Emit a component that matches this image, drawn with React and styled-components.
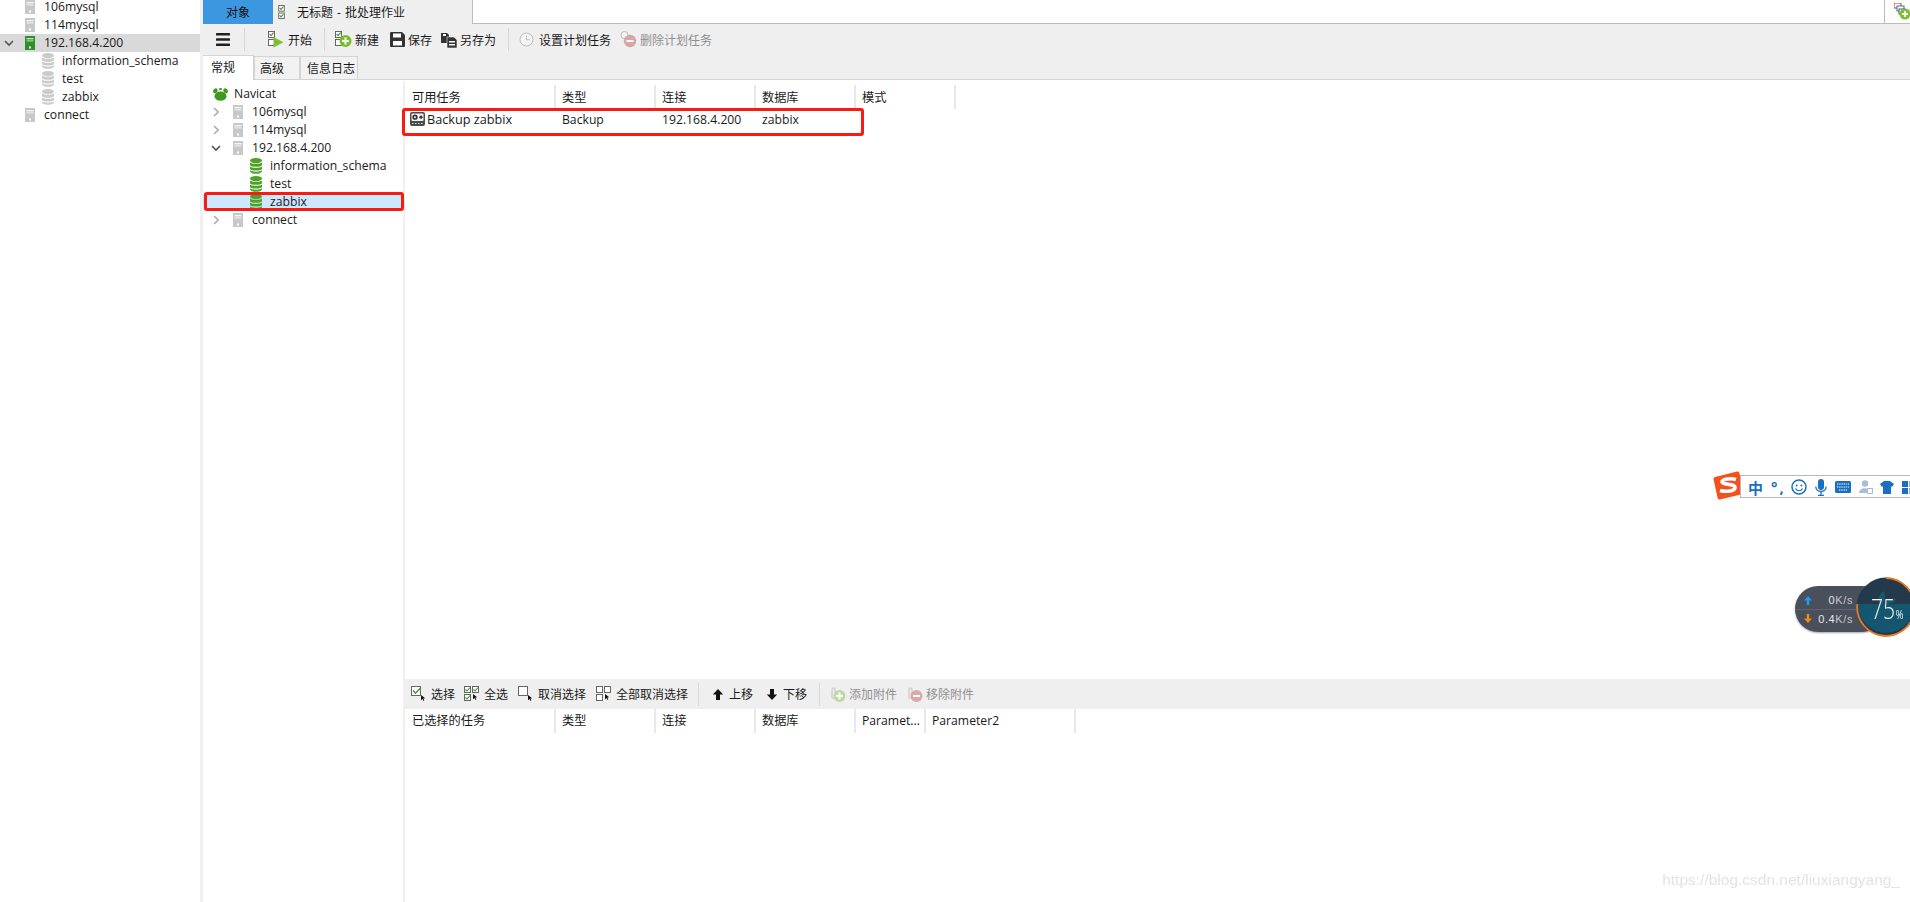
import React from "react";
import styled, { createGlobalStyle } from "styled-components";

const Global = createGlobalStyle`
  html, body { margin: 0; padding: 0; background: #fff; }
  body { font-family: "Open Sans", "Noto Sans CJK SC", sans-serif; font-size: 12px; color: #1a1a1a; overflow: hidden; }
  #root { height: 902px; }
`;

const Page = styled.div`
  position: relative; width: 1910px; height: 902px; overflow: hidden;
  display: grid; grid-template-columns: 203px 1fr;
`;
const Sidebar = styled.aside`
  background: #fff; border-right: 3px solid #f0f0f0; box-sizing: border-box; overflow: hidden;
`;
const SideList = styled.div`margin-top: -2px;`;
const Main = styled.main`display: flex; flex-direction: column; min-width: 0;`;

const TreeRow = styled.div`
  position: relative; height: 18px; display: flex; align-items: center;
  padding-left: ${p => p.$indent}px;
  background: ${p => p.$bg || "transparent"};
  white-space: nowrap; line-height: 18px; font-size: 12.2px;
`;
const Chevron = styled.span`
  position: absolute; left: ${p => p.$x}px; top: 4px; width: 10px; height: 10px; display: flex;
`;
const RowLabel = styled.span`margin-left: ${p => p.$gap}px;`;
const RedFrame = styled.span`
  position: absolute; pointer-events: none; box-sizing: border-box;
  left: ${p => p.$l}px; right: ${p => p.$r}px; top: ${p => p.$t}px; bottom: ${p => p.$b}px;
  border: 3px solid #fb1a12; border-radius: 3px;
`;

const TabBar = styled.div`
  height: 24px; display: flex; box-sizing: border-box; border-bottom: 1px solid #bcbcbc; flex: none;
`;
const ObjectTab = styled.div`
  width: 70px; background: #3d97e0; color: #111; display: flex; align-items: center; justify-content: center; font-size: 12px; margin-bottom: -1px;
`;
const DocTab = styled.div`
  width: 200px; background: #efefef; display: flex; align-items: center; gap: 12px; padding-left: 5px; box-sizing: border-box; margin-bottom: -1px;
  border-right: 1px solid #bcbcbc; font-size: 12px; word-spacing: 1px;
`;
const TabSpacer = styled.div`flex: 1;`;
const TabCorner = styled.div`
  width: 25px; border-left: 1px solid #bcbcbc; display: flex; align-items: flex-start; justify-content: flex-end;
`;

const TopTools = styled.div`
  height: 31px; background: #efefef; display: flex; align-items: center; padding-left: 13px; flex: none;
`;
const ToolItem = styled.div`
  display: flex; align-items: center; gap: ${p => p.$gap ?? 3}px; margin-left: ${p => p.$ml ?? 9}px;
  color: ${p => p.$off ? "#8f8f8f" : "#1a1a1a"}; white-space: nowrap; font-size: 12px;
`;
const ToolSep = styled.div`
  width: 1px; height: 23px; background: #d9d9d9; margin-left: ${p => p.$ml}px;
`;

const SubTabs = styled.div`
  height: 25px; background: #efefef; display: flex; align-items: flex-end; flex: none; border-bottom: 1px solid #d4d4d4; box-sizing: border-box;
`;
const SubTab = styled.div`
  width: ${p => p.$w}px; box-sizing: border-box; display: flex; align-items: center; padding-left: ${p => p.$pl}px;
  height: ${p => p.$on ? 25 : 23}px; background: ${p => p.$on ? "#fff" : "#f2f2f2"};
  border: 1px solid #d4d4d4; border-bottom: none; margin-bottom: ${p => p.$on ? -1 : 0}px; border-left-width: ${p => p.$on ? 0 : 1}px;
  padding-bottom: ${p => p.$on ? 3 : 0}px; font-size: 12px;
`;

const Body = styled.div`flex: 1; display: flex; min-height: 0;`;
const TreePane = styled.div`
  width: 200px; flex: none; padding-top: 5px; background: #fff; box-sizing: border-box;
`;
const Gutter = styled.div`width: 2px; background: #efefef; flex: none; margin-top: 1px;`;
const Content = styled.div`flex: 1; display: flex; flex-direction: column; min-width: 0;`;
const TableArea = styled.div`height: ${p => p.$h}px; flex: ${p => p.$grow ? 1 : "none"}; padding-top: ${p => p.$pt ?? 0}px; box-sizing: border-box;`;
const HeadRow = styled.div`display: flex; height: ${p => p.$h}px;`;
const HeadCell = styled.div`
  width: ${p => p.$w}px; box-sizing: border-box; border-right: 2px solid #e8e8e8; padding-left: ${p => p.$pl}px; flex: none;
  display: flex; align-items: center; white-space: nowrap; overflow: hidden; font-size: 12.2px; padding-bottom: ${p => p.$pb ?? 0}px;
`;
const DataRow = styled.div`position: relative; display: flex; height: 22px;`;
const DataCell = styled.div`
  width: ${p => p.$w}px; padding-left: ${p => p.$pl ?? 6}px; box-sizing: border-box; display: flex; align-items: center; gap: 2px; white-space: nowrap; padding-bottom: 2px;
  font-size: ${p => p.$fs ?? 12.2}px;
`;
const LowerTools = styled.div`
  height: 30px; background: #efefef; display: flex; align-items: center; padding-left: 6px; flex: none;
`;

const SogouBar = styled.div`
  position: absolute; left: 1740px; right: -2px; top: 475px; height: 23px; box-sizing: border-box;
  background: #fff; border: 1px solid #b6b6c6; color: #1a6fc0;
`;
const SogouLogo = styled.div`position: absolute; left: 1713px; top: 471px; width: 31px; height: 29px;`;
const SogouItem = styled.span`
  position: absolute; left: ${p => p.$x - 1741}px; top: 1px; height: 20px; display: flex; align-items: center;
  font-weight: 700; font-size: 15px; color: #1a6fc0; letter-spacing: ${p => p.$ls ?? 0}px;
`;

const NetPill = styled.div`
  position: absolute; left: 1795px; top: 586px; width: 90px; height: 46px; border-radius: 23px; padding-top: 5px; box-sizing: border-box;
  background: #4a4f5c; box-shadow: 0 1px 2px rgba(0,0,0,.35); color: #e6e6e6; font-size: 11px;
  display: flex; flex-direction: column;
`;
const NetRow = styled.div`
  height: ${p => p.$line ? 19 : 17}px; display: flex; align-items: center; padding-left: 9px; box-sizing: border-box; flex: none;
  ${p => p.$line ? "border-bottom: 1px solid #5d626e;" : ""}
`;
const NetValue = styled.span`
  width: 41px; text-align: right; letter-spacing: .6px; font-family: "Liberation Sans", sans-serif; white-space: nowrap;
  & b { font-weight: 400; color: #c3c6cc; }
`;
const Dial = styled.div`
  position: absolute; left: 1856px; top: 577px; width: 60px; height: 60px;
`;
const DialText = styled.span`
  position: absolute; left: 15px; top: 13px; color: #f2f4f5; font-size: 27px; line-height: 38px;
  font-family: "Open Sans", sans-serif; font-weight: 300; white-space: nowrap;
  transform: scaleX(.78); transform-origin: left center;
  & small { font-size: 12px; font-weight: 400; margin-left: 1px; }
`;
const Watermark = styled.div`
  position: absolute; right: 10px; top: 871px; color: #e3e3e3; font: 15.5px "Liberation Sans", sans-serif; filter: blur(.4px); white-space: nowrap;
`;

const ChevR = ({ c = "#a9a9a9" }) => <svg width="10" height="10" viewBox="0 0 10 10"><path d="M3 1l4.2 4L3 9" fill="none" stroke={c} strokeWidth="1.5"/></svg>;
const ChevD = () => <svg width="10" height="10" viewBox="0 0 10 10"><path d="M1 3l4 4 4-4" fill="none" stroke="#555" strokeWidth="1.6"/></svg>;
const Server = ({ on }) => (
  <svg width="10" height="14" viewBox="0 0 10 14" style={{ flex: "none" }}>
    <rect width="10" height="14" fill={on ? "#2f8f2a" : "#c8c8c8"} />
    <rect x="1.5" y="2" width="7" height="1.4" fill={on ? "#bfe3bb" : "#f4f4f4"} />
    <rect x="1.5" y="4.4" width="7" height="1" fill={on ? "#bfe3bb" : "#f4f4f4"} />
    <rect x="4" y="10.5" width="2" height="2" fill="#fff" />
  </svg>
);
const Db = ({ on }) => {
  const c = on ? "#4ea228" : "#cbcbcb";
  return (
    <svg width="12" height="16" viewBox="0 0 12 16" style={{ flex: "none" }}>
      <ellipse cx="6" cy="2.6" rx="6" ry="2.6" fill={c} />
      <path d="M0 4.4c1.2 1.9 10.8 1.9 12 0v2.8c-1.2 2-10.8 2-12 0z" fill={c} />
      <path d="M0 8.4c1.2 1.9 10.8 1.9 12 0v2.6c-1.2 2-10.8 2-12 0z" fill={c} />
      <path d="M0 12.2c1.2 1.9 10.8 1.9 12 0v1.2c-1.2 3.2-10.8 3.2-12 0z" fill={c} />
    </svg>
  );
};
const Paw = () => (
  <svg width="15" height="13" viewBox="0 0 15 13" style={{ flex: "none" }}>
    <ellipse cx="7.5" cy="8.2" rx="6" ry="4.6" fill="#3c9a1e" />
    <ellipse cx="2.4" cy="2.8" rx="2.1" ry="2.6" fill="#3c9a1e" transform="rotate(30 2.4 2.8)" />
    <ellipse cx="12.6" cy="2.8" rx="2.1" ry="2.6" fill="#3c9a1e" transform="rotate(-30 12.6 2.8)" />
    <ellipse cx="7.5" cy="1" rx="1.6" ry="1" fill="#3c9a1e" />
  </svg>
);
const Checks = ({ w = 7, h = 15 }) => (
  <svg width={w} height={h} viewBox="0 0 7 16" style={{ flex: "none" }}>
    <rect x=".5" y=".5" width="6" height="6" fill="#fff" stroke="#666" />
    <rect x=".5" y="8.5" width="6" height="6" fill="#fff" stroke="#666" />
    <path d="M1.5 3l1.5 1.6L5.6 1.6M1.5 11l1.5 1.6 2.6-3" fill="none" stroke="#3f9a2f" strokeWidth="1.2" />
  </svg>
);
const Start = () => (
  <svg width="16" height="17" viewBox="0 0 16 17" style={{ flex: "none" }}>
    <rect x=".5" y=".5" width="6" height="6" fill="#fff" stroke="#666" />
    <rect x=".5" y="8.5" width="6" height="6" fill="#fff" stroke="#666" />
    <path d="M1.6 3l1.5 1.6 2.5-3" fill="none" stroke="#3f9a2f" strokeWidth="1.2" />
    <path d="M5.5 6l10 5.2-10 5.4z" fill="#7cc12c" />
  </svg>
);
const NewDoc = () => (
  <svg width="17" height="17" viewBox="0 0 17 17" style={{ flex: "none" }}>
    <rect x=".5" y=".5" width="6" height="6" fill="#fff" stroke="#666" />
    <rect x=".5" y="8.5" width="6" height="6" fill="#fff" stroke="#666" />
    <path d="M1.6 3l1.5 1.6 2.5-3" fill="none" stroke="#3f9a2f" strokeWidth="1.2" />
    <circle cx="10.5" cy="10" r="6" fill="#79bf2a" />
    <path d="M10.5 6.5v7M7 10h7" stroke="#fff" strokeWidth="2" />
  </svg>
);
const Save = () => (
  <svg width="15" height="15" viewBox="0 0 15 15" style={{ flex: "none" }}>
    <path d="M0 1a1 1 0 011-1h11l3 3v11a1 1 0 01-1 1H1a1 1 0 01-1-1z" fill="#333" />
    <rect x="3" y="1.5" width="8" height="4" fill="#fff" />
    <rect x="3" y="9" width="9" height="4.5" fill="#fff" />
  </svg>
);
const SaveAs = () => (
  <svg width="16" height="16" viewBox="0 0 16 16" style={{ flex: "none" }}>
    <path d="M0 1h6l2 2v8H0z" fill="#333" />
    <rect x="2" y="2" width="3" height="2" fill="#fff" />
    <path d="M6 5h7l3 3v8H6z" fill="#333" stroke="#efefef" strokeWidth=".6" />
    <rect x="8" y="9" width="6" height="1.5" fill="#fff" />
    <rect x="8" y="12" width="6" height="1.5" fill="#fff" />
  </svg>
);
const Clock = () => (
  <svg width="15" height="15" viewBox="0 0 15 15" style={{ flex: "none" }}>
    <circle cx="7.5" cy="7.5" r="6.5" fill="#f4f4f4" stroke="#bdbdbd" />
    <path d="M7.5 3.5v4.2h3" fill="none" stroke="#bdbdbd" />
  </svg>
);
const DelClock = () => (
  <svg width="17" height="17" viewBox="0 0 17 17" style={{ flex: "none" }}>
    <circle cx="4.5" cy="4" r="3.5" fill="#f4f4f4" stroke="#bdbdbd" />
    <circle cx="10" cy="10" r="6.2" fill="#d9a6a6" />
    <rect x="6.5" y="9" width="7" height="2" fill="#fff" />
  </svg>
);
const Clip = ({ minus }) => (
  <svg width="16" height="17" viewBox="0 0 16 17" style={{ flex: "none" }}>
    <path d="M2 3.5a1.5 1.5 0 013 0V11a1.5 1.5 0 01-3 0z" fill="none" stroke="#c8c8c8" strokeWidth="1.2" />
    <circle cx="9.5" cy="10" r="6" fill={minus ? "#dba8a8" : "#bcd9a6"} />
    {minus ? <rect x="6" y="9" width="7" height="2" fill="#fff" /> : <path d="M9.5 6.5v7M6 10h7" stroke="#fff" strokeWidth="2" />}
  </svg>
);
const Cursor = ({ x, y }) => <path d={`M${x} ${y}l4.2 3.2-1.9.4 1 2-.8.4-1-2-1.5 1.2z`} fill="#111" />;
const SelOne = ({ check }) => (
  <svg width="17" height="16" viewBox="0 0 17 16" style={{ flex: "none" }}>
    <rect x=".5" y=".5" width="9" height="9" fill="#fff" stroke="#666" />
    {check && <path d="M2 4.5l2.5 2.8L10 1.5" fill="none" stroke="#3f9a2f" strokeWidth="1.4" />}
    <Cursor x={10} y={9} />
  </svg>
);
const SelAll = ({ check }) => (
  <svg width="17" height="16" viewBox="0 0 17 16" style={{ flex: "none" }}>
    {[[0, 0], [8, 0], [0, 8]].map(([x, y]) => <rect key={x + "-" + y} x={x + .5} y={y + .5} width="6" height="6" fill="#fff" stroke="#666" />)}
    {check && <path d="M1.5 3.5l1.5 1.5 3-3.5M9.5 3.5l1.5 1.5 3-3.5M1.5 11.5l1.5 1.5 3-3.5" fill="none" stroke="#3f9a2f" strokeWidth="1.1" />}
    <Cursor x={9} y={8} />
  </svg>
);
const Arrow = ({ down }) => (
  <svg width="12" height="11" viewBox="0 0 12 11" style={{ flex: "none", transform: down ? "rotate(180deg)" : "none" }}>
    <path d="M6 0l5.2 5.4H8V11H4V5.4H.8z" fill="#111" />
  </svg>
);
const Burger = () => (
  <svg width="14" height="13" viewBox="0 0 14 13" style={{ flex: "none" }}>
    <rect width="14" height="2.6" rx=".6" fill="#222" /><rect y="5.2" width="14" height="2.6" rx=".6" fill="#222" /><rect y="10.4" width="14" height="2.6" rx=".6" fill="#222" />
  </svg>
);
const BackupIcon = () => (
  <svg width="15" height="14" viewBox="0 0 15 14" style={{ flex: "none" }}>
    <rect width="15" height="14" rx="2" fill="#4c4c4c" />
    <rect x="1.5" y="1.5" width="12" height="7.5" rx="1" fill="#f2f2f2" />
    <circle cx="5" cy="5.2" r="2.6" fill="#333" /><circle cx="5" cy="5.2" r="1" fill="#f2f2f2" />
    <circle cx="11" cy="5.2" r="1.6" fill="#333" />
    <path d="M2 11.5h11" stroke="#ddd" strokeDasharray="1.5 1.5" />
  </svg>
);
const CornerIcon = () => (
  <svg width="17" height="17" viewBox="0 0 17 17" style={{ marginTop: 3, marginRight: -1 }}>
    <rect x="0" y="0" width="7" height="5" fill="#fff" stroke="#c0392b" strokeWidth="1" />
    <rect x="3" y="3" width="7" height="5" fill="#fff" stroke="#2e74b5" strokeWidth="1" />
    <rect x="5" y="6" width="6" height="5" fill="#fff" stroke="#555" strokeWidth="1" />
    <circle cx="11" cy="11" r="5.5" fill="#7cc12c" />
    <path d="M11 8v6M8 11h6" stroke="#fff" strokeWidth="1.8" />
  </svg>
);

const sideRows = [
  { t: "106mysql", s: 1 }, { t: "114mysql", s: 1 }, { t: "192.168.4.200", s: 1, on: 1 },
  { t: "information_schema", d: 1 }, { t: "test", d: 1 }, { t: "zabbix", d: 1 }, { t: "connect", s: 1 },
];
const paneRows = [
  { t: "106mysql", s: 1, c: "r" }, { t: "114mysql", s: 1, c: "r" }, { t: "192.168.4.200", s: 1, c: "d" },
  { t: "information_schema", d: 1 }, { t: "test", d: 1 }, { t: "zabbix", d: 1, sel: 1 }, { t: "connect", s: 1, c: "r" },
];
const topCols = [["可用任务", 151, 7], ["类型", 100, 6], ["连接", 100, 6], ["数据库", 100, 6], ["模式", 100, 6]];
const lowCols = [["已选择的任务", 151, 7], ["类型", 100, 6], ["连接", 100, 6], ["数据库", 100, 6], ["Paramet...", 70, 6], ["Parameter2", 150, 6]];

export default function App() {
  return (
    <Page>
      <Global />
      <Sidebar>
        <SideList>
          {sideRows.map(r => (
            <TreeRow key={r.t} $indent={r.s ? 25 : 42} $bg={r.on ? "#d9d9d9" : undefined}>
              {r.on && <Chevron $x={4}><ChevD /></Chevron>}
              {r.s ? <Server on={r.on} /> : <Db />}
              <RowLabel $gap={r.s ? 9 : 8}>{r.t}</RowLabel>
            </TreeRow>
          ))}
        </SideList>
      </Sidebar>
      <Main>
        <TabBar>
          <ObjectTab>对象</ObjectTab>
          <DocTab><Checks />无标题 - 批处理作业</DocTab>
          <TabSpacer />
          <TabCorner><CornerIcon /></TabCorner>
        </TabBar>
        <TopTools>
          <Burger />
          <ToolSep $ml={14} />
          <ToolItem $ml={23} $gap={4}><Start />开始</ToolItem>
          <ToolSep $ml={12} />
          <ToolItem $ml={10} $gap={3}><NewDoc />新建</ToolItem>
          <ToolItem $ml={11}><Save />保存</ToolItem>
          <ToolItem><SaveAs />另存为</ToolItem>
          <ToolSep $ml={12} />
          <ToolItem $ml={10} $gap={5}><Clock />设置计划任务</ToolItem>
          <ToolItem $off><DelClock />删除计划任务</ToolItem>
        </TopTools>
        <SubTabs>
          <SubTab $w={51} $pl={8} $on>常规</SubTab>
          <SubTab $w={46} $pl={5}>高级</SubTab>
          <SubTab $w={58} $pl={6}>信息日志</SubTab>
        </SubTabs>
        <Body>
          <TreePane>
            <TreeRow $indent={10}><Paw /><RowLabel $gap={6}>Navicat</RowLabel></TreeRow>
            {paneRows.map(r => (
              <TreeRow key={r.t} $indent={r.s ? 30 : 47} $bg={r.sel ? "#cce8ff" : undefined}>
                {r.c === "r" && <Chevron $x={8}><ChevR /></Chevron>}
                {r.c === "d" && <Chevron $x={8}><ChevD /></Chevron>}
                {r.s ? <Server /> : <Db on />}
                <RowLabel $gap={r.s ? 9 : 8}>{r.t}</RowLabel>
                {r.sel && <RedFrame $l={1} $r={-1} $t={-1} $b={0} />}
              </TreeRow>
            ))}
          </TreePane>
          <Gutter />
          <Content>
            <TableArea $grow $pt={5}>
              <HeadRow $h={24}>
                {topCols.map(([t, w, pl]) => <HeadCell key={t} $w={w} $pl={pl}>{t}</HeadCell>)}
              </HeadRow>
              <DataRow>
                <DataCell $w={151} $pl={5} $fs={12.7}><BackupIcon />Backup zabbix</DataCell>
                <DataCell $w={100}>Backup</DataCell>
                <DataCell $w={100}>192.168.4.200</DataCell>
                <DataCell $w={100}>zabbix</DataCell>
                <RedFrame $l={-3} $r={1046} $t={-1} $b={-5} />
              </DataRow>
            </TableArea>
            <LowerTools>
              <ToolItem $ml={0} $gap={3}><SelOne check />选择</ToolItem>
              <ToolItem $ml={9}><SelAll check />全选</ToolItem>
              <ToolItem $ml={10}><SelOne />取消选择</ToolItem>
              <ToolItem $ml={10}><SelAll />全部取消选择</ToolItem>
              <ToolSep $ml={10} />
              <ToolItem $ml={13} $gap={5}><Arrow />上移</ToolItem>
              <ToolItem $ml={13} $gap={5}><Arrow down />下移</ToolItem>
              <ToolSep $ml={12} />
              <ToolItem $ml={10} $off><Clip />添加附件</ToolItem>
              <ToolItem $ml={10} $off><Clip minus />移除附件</ToolItem>
            </LowerTools>
            <TableArea $h={193}>
              <HeadRow $h={24}>
                {lowCols.map(([t, w, pl]) => <HeadCell key={t} $w={w} $pl={pl} $pb={2}>{t}</HeadCell>)}
              </HeadRow>
            </TableArea>
          </Content>
        </Body>
      </Main>
      <SogouLogo>
        <svg width="31" height="29" viewBox="0 0 31 29">
          <path d="M2 6L24 .5a2 2 0 012.4 1.4l4 19a2 2 0 01-1.5 2.4L7 28.4a2 2 0 01-2.4-1.5L.6 8.4A2 2 0 012 6z" fill="#f4511e" />
          <path d="M23 8.5c-5-1.5-14-.5-14 2.5s13 1.5 13 5.5-10 4.5-15 3" fill="none" stroke="#fff" strokeWidth="3.6" />
        </svg>
      </SogouLogo>
      <SogouBar>
        <SogouItem $x={1748}>中</SogouItem>
        <SogouItem $x={1771} $ls={2}>°,</SogouItem>
        <SogouItem $x={1791}>
          <svg width="16" height="16" viewBox="0 0 16 16"><circle cx="8" cy="8" r="7" fill="none" stroke="#1a6fc0" strokeWidth="1.5" /><circle cx="5.6" cy="6.4" r="1" fill="#1a6fc0" /><circle cx="10.4" cy="6.4" r="1" fill="#1a6fc0" /><path d="M4.5 9.5c1.5 3 5.5 3 7 0" fill="none" stroke="#1a6fc0" strokeWidth="1.2" /></svg>
        </SogouItem>
        <SogouItem $x={1815}>
          <svg width="12" height="17" viewBox="0 0 12 17"><rect x="3" y="0" width="6" height="11" rx="3" fill="#1a6fc0" /><path d="M.8 7.5c0 6.5 10.4 6.5 10.4 0M6 13v3M3 16.3h6" fill="none" stroke="#1a6fc0" strokeWidth="1.3" /></svg>
        </SogouItem>
        <SogouItem $x={1835}>
          <svg width="16" height="12" viewBox="0 0 16 12"><rect width="16" height="12" rx="1.5" fill="#1a6fc0" /><path d="M2 3h12M2 6h12M4 9h8" stroke="#fff" strokeDasharray="1.4 .8" /></svg>
        </SogouItem>
        <SogouItem $x={1859}>
          <svg width="14" height="14" viewBox="0 0 14 14"><circle cx="6" cy="3.5" r="3.2" fill="#a9bdd6" /><path d="M0 13c0-6 10-6 10-2v2z" fill="#a9bdd6" /><rect x="8.5" y="8.5" width="5" height="5" fill="#fff" stroke="#a9bdd6" /></svg>
        </SogouItem>
        <SogouItem $x={1880}>
          <svg width="14" height="13" viewBox="0 0 14 13"><path d="M4 0h6l4 3-2 3-1-.7V13H3V5.3L2 6 0 3z" fill="#1a6fc0" /></svg>
        </SogouItem>
        <SogouItem $x={1902}>
          <svg width="14" height="13" viewBox="0 0 14 13"><rect width="6" height="6" fill="#1a6fc0" /><rect x="7.5" width="6" height="6" fill="#1a6fc0" /><rect y="7" width="6" height="6" fill="#1a6fc0" /><rect x="7.5" y="7" width="6" height="6" fill="#1a6fc0" /></svg>
        </SogouItem>
      </SogouBar>
      <NetPill>
        <NetRow $line>
          <svg width="8" height="9" viewBox="0 0 8 9"><path d="M4 0l4 4.5H5.2V9H2.8V4.5H0z" fill="#1e9bf0" /></svg>
          <NetValue>0<b>K/s</b></NetValue>
        </NetRow>
        <NetRow>
          <svg width="8" height="9" viewBox="0 0 8 9"><path d="M4 9L0 4.5h2.8V0h2.4v4.5H8z" fill="#f08c14" /></svg>
          <NetValue>0.4<b>K/s</b></NetValue>
        </NetRow>
      </NetPill>
      <Dial>
        <svg width="60" height="60" viewBox="0 0 60 60">
          <circle cx="30" cy="30" r="29.5" fill="#233a4d" />
          <path d="M1.2 27h57.6A28.8 28.8 0 011.2 27z" fill="#14566f" />
          <path d="M23 27c-2-8 2-11 5-13 1 5 2 9-1 13zM29 27c1-4 6-6 11-5-1 3-5 5-11 5z" fill="#1a5870" />
          <path d="M30 1.2A28.8 28.8 0 111.3 27" fill="none" stroke="#f27a1a" strokeWidth="1.8" />
        </svg>
        <DialText>75<small>%</small></DialText>
      </Dial>
      <Watermark>https://blog.csdn.net/liuxiangyang_</Watermark>
    </Page>
  );
}
